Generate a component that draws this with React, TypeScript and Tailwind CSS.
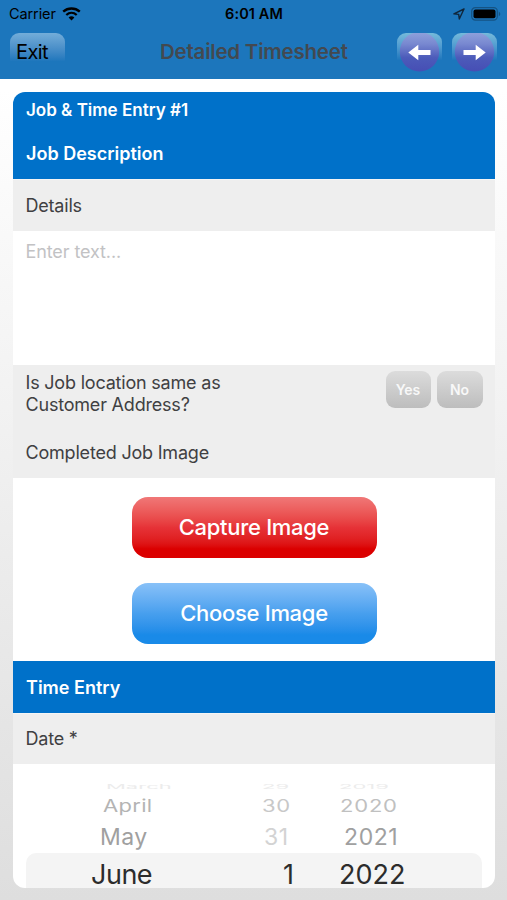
import React from 'react'

const ArrowButton = ({ label, flip = false }: { label: string; flip?: boolean }) => (
  <button
    aria-label={label}
    className="flex h-[39px] w-[45px] items-center justify-center rounded-t-[9px] bg-linear-to-b from-[#76bada] via-[#4f9bd0] via-35% to-[#1c76bc] to-70%"
  >
    <svg width="45" height="39" viewBox="0 0 45 39" className={flip ? '-scale-x-100' : ''}>
      <defs>
        <linearGradient id={label} x1="0" y1="0" x2="0" y2="1">
          <stop offset="0" stopColor="#8fa2dc" />
          <stop offset="0.3" stopColor="#7888d0" />
          <stop offset="0.65" stopColor="#4c5bba" />
          <stop offset="1" stopColor="#464eb4" />
        </linearGradient>
      </defs>
      <circle cx="22.5" cy="18.8" r="19.7" fill={`url(#${label})`} />
      <path d="M11.3 19.5 21.3 11.7V17.1H33.5V21.9H21.3V27.3Z" fill="#fff" />
    </svg>
  </button>
)

const StatusBar = () => (
  <div className="flex h-[27px] items-center pl-[9px] pr-[6px] text-black">
    <div className="flex flex-1 items-center gap-[6px]">
      <span className="text-[14.5px] tracking-[-0.1px]">Carrier</span>
      <svg width="19" height="14" viewBox="0 0 19 14" fill="none" stroke="#000">
        <path d="M1.2 4.7C6 .5 13 .5 17.8 4.7" strokeWidth="2.4" />
        <path d="M4.3 8C7.4 5.2 11.6 5.2 14.7 8" strokeWidth="2.3" />
        <path d="M9.5 13.4 6.6 10.4C8.4 8.9 10.6 8.9 12.4 10.4Z" fill="#000" stroke="none" />
      </svg>
    </div>
    <span className="mr-[2px] text-[14.5px] font-semibold tracking-[0.1px]">6:01 AM</span>
    <div className="flex flex-1 items-center justify-end gap-[6px]">
      <svg width="12" height="12" viewBox="0 0 12 12" fill="none" stroke="#10263a" strokeWidth="1.4" strokeLinejoin="round">
        <path d="M11 1 .9 5.9 5.7 6.4 6.3 11Z" />
      </svg>
      <svg width="30" height="14" viewBox="0 0 30 14">
        <rect x="0.7" y="0.7" width="25.6" height="12.4" rx="3.6" fill="none" stroke="#155383" strokeWidth="1.2" />
        <rect x="2.5" y="2.5" width="22" height="8.8" rx="2" fill="#000" />
        <path d="M27.8 4.6q3 2.3 0 4.6Z" fill="#155383" />
      </svg>
    </div>
  </div>
)

const DatePicker = () => (
  <div className="h-[124px] whitespace-nowrap pt-[19px] leading-none">
    {/* rows get flatter and paler as they roll away from the selected one */}
    <div className="flex h-[8px] items-center text-[22px] text-[#ececec]">
      <div className="flex scale-y-[0.3]">
        <span className="ml-[93px] w-[156px]">March</span>
        <span className="w-[77px]">29</span>
        <span>2019</span>
      </div>
    </div>
    <div className="mt-[4px] flex h-[22px] scale-y-[0.76] items-center text-[22px]">
      <span className="ml-[90px] w-[159px] tracking-[0.3px] text-[#b4b4b4]">April</span>
      <span className="w-[78px] tracking-[0.6px] text-[#c8c8c8]">30</span>
      <span className="tracking-[0.8px] text-[#c0c0c0]">2020</span>
    </div>
    <div className="mt-[7px] flex h-[26px] scale-y-[0.98] items-center text-[23px]">
      <span className="ml-[87px] w-[164px] tracking-[0.4px] text-[#a0a0a0]">May</span>
      <span className="w-[80px] tracking-[0.6px] text-[#d3d3d3]">31</span>
      <span className="tracking-[0.6px] text-[#a0a0a0]">2021</span>
    </div>
    <div className="mx-[13px] mt-[3px] flex h-[35px] items-start rounded-t-[10px] bg-[#f4f4f4] pt-[8px] text-[27px] text-[#2c2c2c]">
      <span className="ml-[65px] w-[192px] tracking-[-0.5px]">June</span>
      <span className="w-[56px]">1</span>
      <span>2022</span>
    </div>
  </div>
)

const App = () => {
  return (
    <div className="flex h-[900px] w-[507px] flex-col overflow-hidden bg-linear-to-b from-white from-10% to-[#dedede] font-['Inter',sans-serif] text-[18px] text-[#404042]">
      <header className="h-[79px] shrink-0 bg-[#1c76bc]">
        <StatusBar />
        <div className="flex h-[52px] items-start px-[10px] pt-[6px]">
          <button className="h-[38px] w-[55px] rounded-[9px] bg-linear-to-b from-[#73add9] via-[#5093cb] via-35% to-[#1c76bc] to-75% pl-[6px] text-left text-[20px] tracking-[-0.6px] text-black">
            Exit
          </button>
          <h1 className="ml-[95px] mt-[5px] w-[237px] whitespace-nowrap text-[20.5px] font-semibold leading-[28px] tracking-[-0.22px] text-[#434950]">
            Detailed Timesheet
          </h1>
          <div className="flex gap-[10px]">
            <ArrowButton label="back" />
            <ArrowButton label="next" flip />
          </div>
        </div>
      </header>

      <main className="mx-[13px] mt-[13px] h-[796px] w-[482px] shrink-0 overflow-hidden rounded-[12px] bg-white">
        <div className="h-[87px] bg-[#0071c9] px-[13px] pt-[5px] font-semibold text-white">
          <h2 className="text-[17px] leading-[26px]">Job &amp; Time Entry #1</h2>
          <h3 className="mt-[18px] leading-[26px]">Job Description</h3>
        </div>
        <div className="flex h-[52px] items-center border-t border-[#f5f5f5] bg-[#eee] px-[12.5px] tracking-[-0.2px]">Details</div>
        <div className="h-[134px] px-[12.5px] pt-[8px] leading-[26px] tracking-[-0.1px] text-[#c2c2c4]">Enter text...</div>
        <div className="flex h-[113px] justify-between bg-[#eee] px-[12.5px]">
          <div className="pt-[7px] leading-[22px] tracking-[-0.2px]">
            <p className="w-[210px]">Is Job location same as Customer Address?</p>
            <p className="mt-[26px]">Completed Job Image</p>
          </div>
          <div className="flex gap-[6px] pt-[6px] text-[14px] font-semibold text-[#f8f8f8]">
            <button className="h-[37px] w-[45px] rounded-[9px] bg-linear-to-b from-[#dcdcdc] to-[#bdbdbd]">Yes</button>
            <button className="h-[37px] w-[46px] rounded-[9px] bg-linear-to-b from-[#dcdcdc] to-[#bdbdbd]">No</button>
          </div>
        </div>
        <div className="flex h-[183px] flex-col items-center gap-[25px] pt-[19px] text-[22px] font-medium tracking-[-0.3px] text-white">
          <button className="h-[61px] w-[245px] rounded-[16px] bg-linear-to-b from-[#f07777] via-[#e63237] via-50% to-[#db0000] to-85%">
            Capture Image
          </button>
          <button className="h-[61px] w-[245px] rounded-[16px] bg-linear-to-b from-[#88c1f8] via-[#479fee] via-50% to-[#198ae8] to-85%">
            Choose Image
          </button>
        </div>
        <div className="flex h-[52px] items-center bg-[#0071c9] px-[13px] font-semibold text-white">Time Entry</div>
        <div className="flex h-[51px] items-center border-t border-[#f5f5f5] bg-[#eee] px-[12.5px] pb-px tracking-[-0.2px]">Date *</div>
        <DatePicker />
      </main>
    </div>
  )
}

export default App
